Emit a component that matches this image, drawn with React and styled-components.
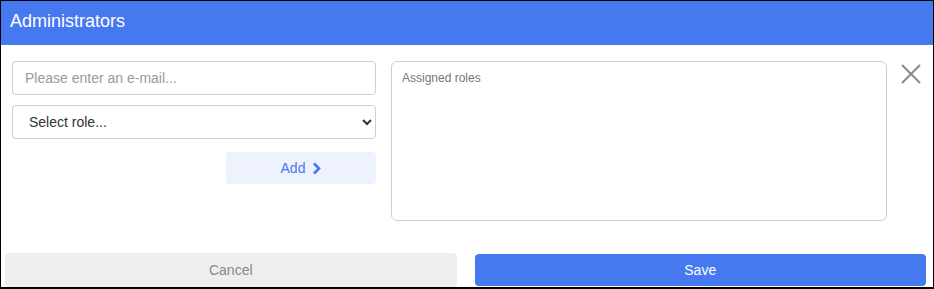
import React from "react";
import styled, { createGlobalStyle } from "styled-components";

const Global = createGlobalStyle`
  html, body { margin: 0; padding: 0; background: #fff; }
  body { font-family: "Liberation Sans", Arial, sans-serif; }
  * { box-sizing: border-box; }
`;

const Dialog = styled.div`
  width: 934px;
  height: 289px;
  border: 1px solid #000;
  border-bottom-width: 2px;
  display: flex;
  flex-direction: column;
  background: #fff;
`;

const Header = styled.div`
  height: 44px;
  background: #4679f0;
  color: #fff;
  font-size: 18px;
  line-height: 40px;
  padding: 0 0 4px 9px;
  flex-shrink: 0;
`;

const Body = styled.div`
  display: flex;
  padding: 16px 0 0 11px;
  height: 206px;
`;

const LeftColumn = styled.div`
  width: 364px;
  flex-shrink: 0;
  display: flex;
  flex-direction: column;
  align-items: flex-end;
`;

const fieldBase = `
  width: 100%;
  height: 34px;
  border: 1px solid #cfcfcf;
  border-radius: 4px;
  font-family: "Liberation Sans", Arial, sans-serif;
  font-size: 14px;
  background: #fff;
  outline: none;
`;

const EmailInput = styled.input`
  ${fieldBase}
  padding: 0 12px;
  color: #333;
  &::placeholder { color: #9a9a9a; }
`;

const RoleSelect = styled.select`
  ${fieldBase}
  margin-top: 10px;
  padding: 0 12px;
  color: #333;
`;

const AddButton = styled.button`
  margin-top: 13px;
  width: 150px;
  height: 32px;
  border: none;
  border-radius: 4px;
  background: #edf2fd;
  color: #4679f0;
  font-family: "Liberation Sans", Arial, sans-serif;
  font-size: 14px;
  display: flex;
  align-items: center;
  justify-content: center;
  gap: 7px;
  padding: 0;
  cursor: pointer;
`;

const RolesBox = styled.div`
  margin-left: 15px;
  width: 496px;
  flex-shrink: 0;
  height: 160px;
  border: 1px solid #cfcfcf;
  border-radius: 6px;
  padding: 9px 10px;
  font-size: 12px;
  color: #777;
`;

const CloseButton = styled.button`
  margin-left: 11px;
  width: 26px;
  height: 26px;
  flex-shrink: 0;
  border: none;
  background: none;
  padding: 0;
  display: flex;
  align-items: center;
  justify-content: center;
  cursor: pointer;
`;

const Footer = styled.div`
  display: flex;
  gap: 18px;
  padding: 8px 7px 0 4px;
`;

const FooterButton = styled.button`
  flex: 1;
  border: none;
  border-radius: 4px;
  font-family: "Liberation Sans", Arial, sans-serif;
  font-size: 14px;
  cursor: pointer;
  background: ${(p) => (p.$primary ? "#4679f0" : "#eeeeee")};
  color: ${(p) => (p.$primary ? "#fff" : "#888")};
  margin-top: ${(p) => (p.$primary ? "1px" : "0")};
  height: ${(p) => (p.$primary ? "32px" : "34px")};
`;

export default function App() {
  return (
    <>
      <Global />
      <Dialog>
        <Header>Administrators</Header>
        <Body>
          <LeftColumn>
            <EmailInput placeholder="Please enter an e-mail..." />
            <RoleSelect defaultValue="">
              <option value="">Select role...</option>
            </RoleSelect>
            <AddButton>
              Add
              <svg width="9" height="13" viewBox="0 0 9 13">
                <path d="M2 1.5 L7 6.5 L2 11.5" fill="none" stroke="#4679f0" strokeWidth="2.6" strokeLinejoin="miter" />
              </svg>
            </AddButton>
          </LeftColumn>
          <RolesBox>Assigned roles</RolesBox>
          <CloseButton aria-label="Close">
            <svg width="22" height="22" viewBox="0 0 22 22">
              <path d="M2 2 L20 20 M20 2 L2 20" stroke="#8a8a8a" strokeWidth="2" fill="none" />
            </svg>
          </CloseButton>
        </Body>
        <Footer>
          <FooterButton>Cancel</FooterButton>
          <FooterButton $primary>Save</FooterButton>
        </Footer>
      </Dialog>
    </>
  );
}
